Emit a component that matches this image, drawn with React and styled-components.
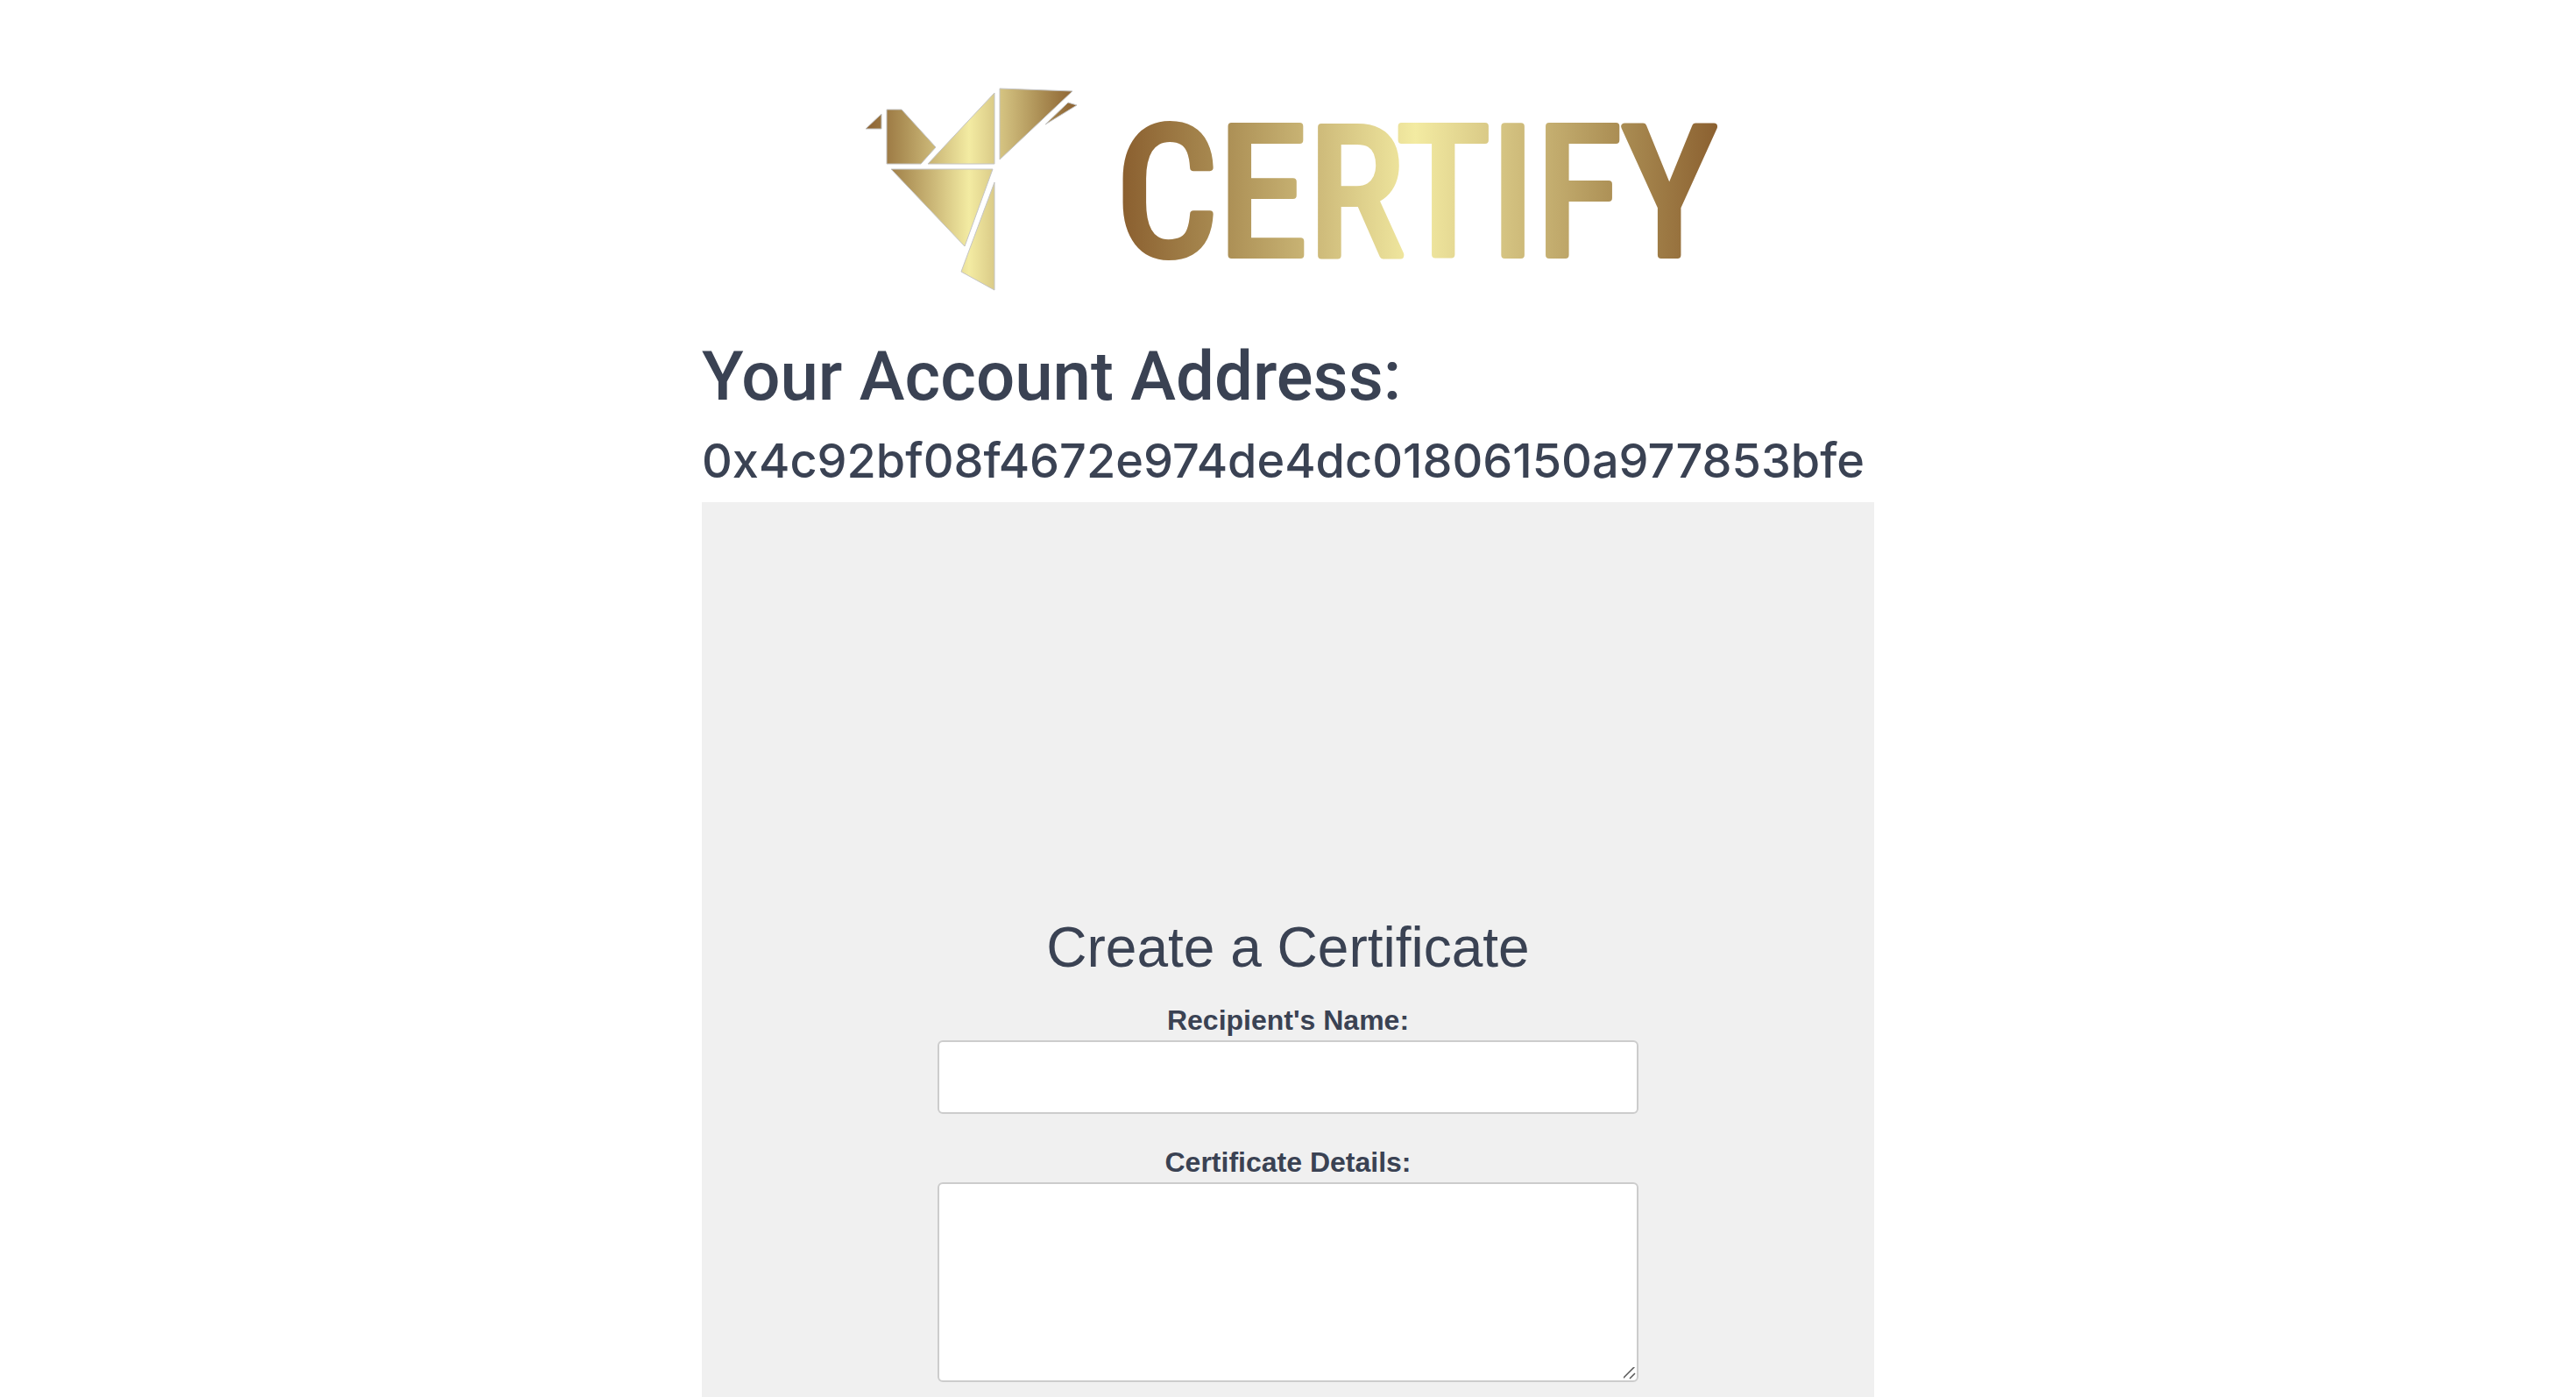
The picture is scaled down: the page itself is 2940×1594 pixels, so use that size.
import React, { useState } from 'react';
import styled, { createGlobalStyle } from 'styled-components';

const GlobalStyle = createGlobalStyle`
  *,
  *::before,
  *::after {
    box-sizing: border-box;
  }

  body {
    margin: 0;
    background: #fff;
    color: #3a4253;
    font-family: Inter, 'Liberation Sans', sans-serif;
  }
`;

const Page = styled.main`
  display: flex;
  flex-direction: column;
  align-items: center;
  min-height: 100vh;
  padding-top: 90px;
`;

const LogoSvg = styled.svg`
  width: 1000px;
  max-width: 100%;
`;

const Wordmark = styled.text`
  font-family: 'Roboto Condensed', Roboto, sans-serif;
  font-size: 206px;
  font-weight: 400;
  stroke-width: 8px;
  stroke-linejoin: round;
`;

const Account = styled.section`
  display: flex;
  flex: 1;
  flex-direction: column;
  width: 1338px;
  max-width: 100%;
  margin-top: 42px;
`;

const Title = styled.h1`
  margin: 0;
  font-family: Roboto, 'Liberation Sans', sans-serif;
  font-size: 78px;
  font-weight: 500;
  line-height: 96px;
`;

const Address = styled.h2`
  margin: 0;
  font-size: 54px;
  font-weight: 500;
  line-height: 95px;
  overflow-wrap: anywhere;
`;

const Panel = styled.div`
  display: flex;
  flex: 1;
  flex-direction: column;
  align-items: center;
  padding: 460px 0 17px;
  background: #f0f0f0;
  font-family: 'Liberation Sans', Arial, sans-serif;
`;

const Form = styled.form`
  display: flex;
  flex-direction: column;
  align-items: center;
  gap: 32px;
  width: 800px;
  max-width: 100%;
`;

const FormTitle = styled.h3`
  margin: 0 0 -20px;
  font-size: 64px;
  font-weight: 400;
  line-height: 96px;
`;

const Field = styled.div`
  display: flex;
  flex-direction: column;
  width: 100%;
`;

const Label = styled.label`
  font-size: 32px;
  font-weight: 700;
  line-height: 46px;
  text-align: center;
`;

const Input = styled.input`
  height: 84px;
  padding: 16px;
  border: 2px solid #ccc;
  border-radius: 6px;
  background: #fff;
  font: inherit;
  font-size: 32px;
`;

const TextArea = styled.textarea`
  height: 228px;
  padding: 16px;
  border: 2px solid #ccc;
  border-radius: 6px;
  background: #fff;
  font: inherit;
  font-size: 32px;
  resize: vertical;

  &::-webkit-scrollbar {
    width: 20px;
    height: 20px;
  }

  &::-webkit-resizer {
    background: url("data:image/svg+xml,%3Csvg xmlns='http://www.w3.org/2000/svg' width='20' height='20'%3E%3Cpath d='M4 18L18 4M12 18L18 12' stroke='%23555' stroke-width='1.5'/%3E%3C/svg%3E")
      no-repeat right bottom;
  }
`;

const BIRD = [
  '18,57 36,40 36,57',
  '42,35 59,35 98,78 81,97 42,97',
  '89,97 165,16 165,97',
  '171,11 254,14 171,92',
  '249,27 259,30 223,52',
  '47,103 163,103 131,191',
  '165,118 165,241 127,220',
];

const GoldGradient = ({ id, from, to }) => (
  <linearGradient id={id} gradientUnits="userSpaceOnUse" x1={from} x2={to} y1="0" y2="0">
    <stop offset="0" stopColor="#8b6030" />
    <stop offset="0.17" stopColor="#ab8e54" />
    <stop offset="0.32" stopColor="#ccb878" />
    <stop offset="0.49" stopColor="#f3eba2" />
    <stop offset="0.68" stopColor="#ccb878" />
    <stop offset="0.83" stopColor="#ab8e54" />
    <stop offset="1" stopColor="#8b6030" />
  </linearGradient>
);

const Logo = () => (
  <LogoSvg viewBox="0 0 1000 250" role="img" aria-label="Certify">
    <defs>
      <GoldGradient id="birdGold" from={18} to={259} />
      <GoldGradient id="textGold" from={312} to={992} />
    </defs>
    <g fill="url(#birdGold)" stroke="#c4c4c4" strokeWidth="1">
      {BIRD.map(points => (
        <polygon key={points} points={points} />
      ))}
    </g>
    <Wordmark x="303" y="201" fill="url(#textGold)" stroke="url(#textGold)">
      CERTIFY
    </Wordmark>
  </LogoSvg>
);

const CertificateForm = () => {
  const [name, setName] = useState('');
  const [details, setDetails] = useState('');

  return (
    <Form>
      <FormTitle>Create a Certificate</FormTitle>
      <Field>
        <Label htmlFor="name">Recipient&apos;s Name:</Label>
        <Input id="name" type="text" value={name} onChange={e => setName(e.target.value)} />
      </Field>
      <Field>
        <Label htmlFor="details">Certificate Details:</Label>
        <TextArea id="details" value={details} onChange={e => setDetails(e.target.value)} />
      </Field>
    </Form>
  );
};

export default function App() {
  return (
    <>
      <GlobalStyle />
      <Page>
        <Logo />
        <Account>
          <Title>Your Account Address:</Title>
          <Address>0x4c92bf08f4672e974de4dc01806150a977853bfe</Address>
          <Panel>
            <CertificateForm />
          </Panel>
        </Account>
      </Page>
    </>
  );
}
